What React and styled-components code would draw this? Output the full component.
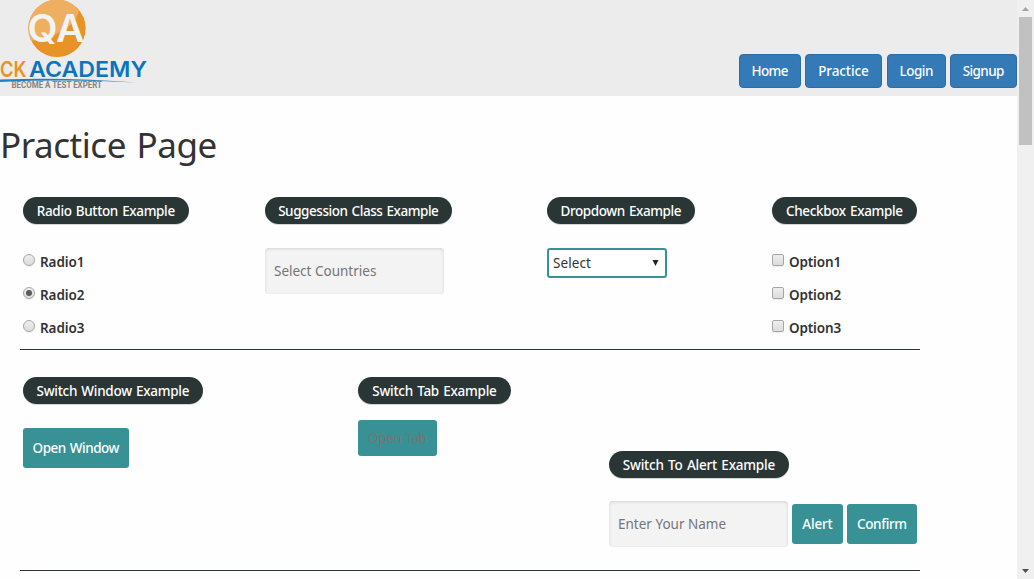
import React from "react";
import styled, { createGlobalStyle } from "styled-components";

const GlobalStyle = createGlobalStyle`
  * { box-sizing: border-box; }
  html, body { margin: 0; height: 100%; overflow: hidden; }
  body {
    background: #fefefe;
    color: #333;
    font-family: "Trebuchet MS", "Noto Sans", "Open Sans", sans-serif;
    font-size: 13.5px;
    line-height: 20px;
  }
  button, input, select { font: inherit; margin: 0; }
`;

const Window = styled.div`
  display: flex;
  width: 1034px;
  height: 579px;
  overflow: hidden;
`;

const Page = styled.div`
  width: 1017px;
  height: 100%;
  overflow: hidden;
`;

const Header = styled.header`
  display: flex;
  justify-content: space-between;
  align-items: flex-start;
  height: 96px;
  background: #ececec;
`;

const Logo = styled.svg`
  display: block;
  width: 160px;
  height: 96px;
`;

const Nav = styled.nav`
  display: flex;
  padding-top: 54px;
`;

const Label = styled.span`
  white-space: nowrap;
  letter-spacing: ${(p) => p.$track || 0}px;
  margin-right: ${(p) => -(p.$track || 0)}px;
  word-spacing: 1px;
`;

const NavButton = styled.button`
  display: flex;
  align-items: center;
  justify-content: center;
  width: ${(p) => p.$width}px;
  height: 34px;
  margin-left: ${(p) => p.$gap || 4}px;
  padding: 0;
  border: 1px solid #2e6da4;
  border-radius: 4px;
  background: #337ab7;
  color: #fff;
  font-weight: 550;
`;

const Title = styled.h1`
  margin: 29px 0 32px;
  height: 40px;
  font-size: 35px;
  font-weight: 400;
  line-height: 40px;
  letter-spacing: -0.45px;
  word-spacing: 2px;
  white-space: nowrap;
`;

const Section = styled.section`
  display: grid;
  grid-template-columns: ${(p) => p.$columns};
  width: 900px;
  height: ${(p) => p.$height}px;
  margin-left: 20px;
  padding-left: 3px;
  border-bottom: 1px solid #2a3636;
`;

const Cell = styled.div`
  display: flex;
  flex-direction: column;
  align-items: flex-start;
  padding-top: ${(p) => p.$top || 0}px;
`;

const Pill = styled.div`
  display: flex;
  align-items: center;
  justify-content: center;
  width: ${(p) => p.$width}px;
  height: 27px;
  margin-bottom: ${(p) => p.$below || 24}px;
  border-radius: 14px;
  background: #2a3636;
  box-shadow: 0 1px 0 #d4d6d6;
  color: #fff;
  font-weight: 550;
`;

const Choice = styled.label`
  display: flex;
  align-items: center;
  height: 28px;
  margin-bottom: 5px;
  gap: 5px;
  color: #333;
  font-weight: 650;
`;

const Mark = styled.input`
  appearance: none;
  display: grid;
  place-items: center;
  width: 12px;
  height: 12px;
  margin-bottom: 4px;
  border: 1px solid #a6a6a6;
  border-radius: ${(p) => (p.type === "radio" ? "50%" : "2px")};
  background: linear-gradient(#eee, #dcdcdc);
  box-shadow: 0 1px 0 #ececec;
  &:checked::after {
    content: "";
    width: 6px;
    height: 6px;
    border-radius: 50%;
    background: #5b5b5b;
  }
`;

const Field = styled.input`
  width: 179px;
  height: 46px;
  padding: 0 9px 1px;
  border: 0;
  border-radius: 4px;
  outline: 0;
  background: #f3f3f3;
  box-shadow: inset 0 1px 3px #d4d4d4;
  &::placeholder { color: #757575; opacity: 1; }
`;

const Dropdown = styled.button`
  display: flex;
  align-items: center;
  justify-content: space-between;
  width: 120px;
  height: 30px;
  padding: 0 6px 0 4px;
  border: 2px solid #389295;
  border-radius: 3px;
  background: #fff;
  color: #333;
`;

const Action = styled.button`
  display: flex;
  align-items: center;
  justify-content: center;
  width: ${(p) => p.$width}px;
  height: ${(p) => p.$height || 40}px;
  padding: 0;
  border: 0;
  border-radius: 3px;
  background: #389295;
  color: ${(p) => (p.$muted ? "#757575" : "#fff")};
  font-weight: ${(p) => (p.$muted ? 400 : 550)};
`;

const Inline = styled.div`
  display: flex;
  align-items: center;
  gap: 4px;
`;

const Scrollbar = styled.aside`
  display: flex;
  flex-direction: column;
  align-items: center;
  width: 17px;
  padding: 7px 0 6px;
  background: #f0f0f0;
`;

const Thumb = styled.div`
  width: 13px;
  height: 128px;
  margin: 6px 2px auto;
  background: #c1c1c1;
`;

const Arrow = styled.svg`
  display: block;
  width: 7px;
  height: ${(p) => p.$height || 4}px;
`;

const LogoText = styled.text`
  font-family: Inter, sans-serif;
  font-weight: 600;
`;

function Brand() {
  return (
    <Logo viewBox="0 0 160 96" aria-label="QA Click Academy">
      <defs>
        <clipPath id="badge"><circle cx="57" cy="28.3" r="28.8" /></clipPath>
      </defs>
      <g clipPath="url(#badge)">
        <circle cx="57" cy="28.3" r="28.8" fill="#e79327" />
        <path d="M20 0H77Q82 10 74 21Q62 36 31 41L20 32Z" fill="#eeaf60" />
      </g>
      <LogoText x="27.5" y="42.3" fontSize="38" fill="#f3f3f3" textLength="57" lengthAdjust="spacingAndGlyphs">QA</LogoText>
      <LogoText x="0" y="77" fontSize="22" fill="#e79327" textLength="26.5" lengthAdjust="spacingAndGlyphs">CK</LogoText>
      <LogoText x="29" y="77" fontSize="22" fill="#0b74bd" textLength="118" lengthAdjust="spacingAndGlyphs">ACADEMY</LogoText>
      <path d="M0 79.5Q70 77 136 82.5Q70 79 0 82Z" fill="#2381bf" />
      <text x="11.5" y="88.2" fontFamily="Roboto" fontSize="8.2" fontWeight="700" fill="#858585" textLength="90.5" lengthAdjust="spacingAndGlyphs">BECOME A TEST EXPERT</text>
    </Logo>
  );
}

const radios = ["Radio1", "Radio2", "Radio3"];
const options = ["Option1", "Option2", "Option3"];

export default function App() {
  return (
    <>
      <GlobalStyle />
      <Window>
        <Page>
          <Header>
            <Brand />
            <Nav>
              <NavButton $width={62}><Label $track={-0.6}>Home</Label></NavButton>
              <NavButton $width={77}><Label $track={-0.1}>Practice</Label></NavButton>
              <NavButton $width={59} $gap={5}><Label $track={-0.5}>Login</Label></NavButton>
              <NavButton $width={67}><Label $track={-0.6}>Signup</Label></NavButton>
            </Nav>
          </Header>
          <Title>Practice Page</Title>
          <Section $columns="242px 282px 225px 1fr" $height={153}>
            <Cell>
              <Pill $width={166}><Label $track={-0.35}>Radio Button Example</Label></Pill>
              {radios.map((name) => (
                <Choice key={name}>
                  <Mark type="radio" name="radio" defaultChecked={name === "Radio2"} />
                  <Label $track={-0.1}>{name}</Label>
                </Choice>
              ))}
            </Cell>
            <Cell>
              <Pill $width={187}><Label $track={-0.45}>Suggession Class Example</Label></Pill>
              <Field placeholder="Select Countries" />
            </Cell>
            <Cell>
              <Pill $width={148}><Label $track={-0.42}>Dropdown Example</Label></Pill>
              <Dropdown>
                <Label $track={0.1}>Select</Label>
                <Arrow viewBox="0 0 7 6" $height={6}><path d="M0.5 0H6.5L3.5 6Z" fill="#222" /></Arrow>
              </Dropdown>
            </Cell>
            <Cell>
              <Pill $width={145}><Label $track={-0.35}>Checkbox Example</Label></Pill>
              {options.map((name) => (
                <Choice key={name}>
                  <Mark type="checkbox" />
                  <Label $track={-0.15}>{name}</Label>
                </Choice>
              ))}
            </Cell>
          </Section>
          <Section $columns="335px 251px 1fr" $height={221}>
            <Cell $top={27}>
              <Pill $width={180}><Label $track={-0.28}>Switch Window Example</Label></Pill>
              <Action $width={106}><Label $track={-0.48}>Open Window</Label></Action>
            </Cell>
            <Cell $top={27}>
              <Pill $width={153} $below={16}><Label $track={-0.26}>Switch Tab Example</Label></Pill>
              <Action $width={79} $height={36} $muted><Label $track={-0.4}>Open Tab</Label></Action>
            </Cell>
            <Cell $top={101}>
              <Pill $width={180} $below={23}><Label $track={-0.2}>Switch To Alert Example</Label></Pill>
              <Inline>
                <Field placeholder="Enter Your Name" />
                <Action $width={51}><Label $track={-0.15}>Alert</Label></Action>
                <Action $width={70}><Label $track={-0.35}>Confirm</Label></Action>
              </Inline>
            </Cell>
          </Section>
        </Page>
        <Scrollbar>
          <Arrow viewBox="0 0 7 4"><path d="M0 4H7L3.5 0Z" fill="#a3a3a3" /></Arrow>
          <Thumb />
          <Arrow viewBox="0 0 7 4"><path d="M0 0H7L3.5 4Z" fill="#505050" /></Arrow>
        </Scrollbar>
      </Window>
    </>
  );
}
